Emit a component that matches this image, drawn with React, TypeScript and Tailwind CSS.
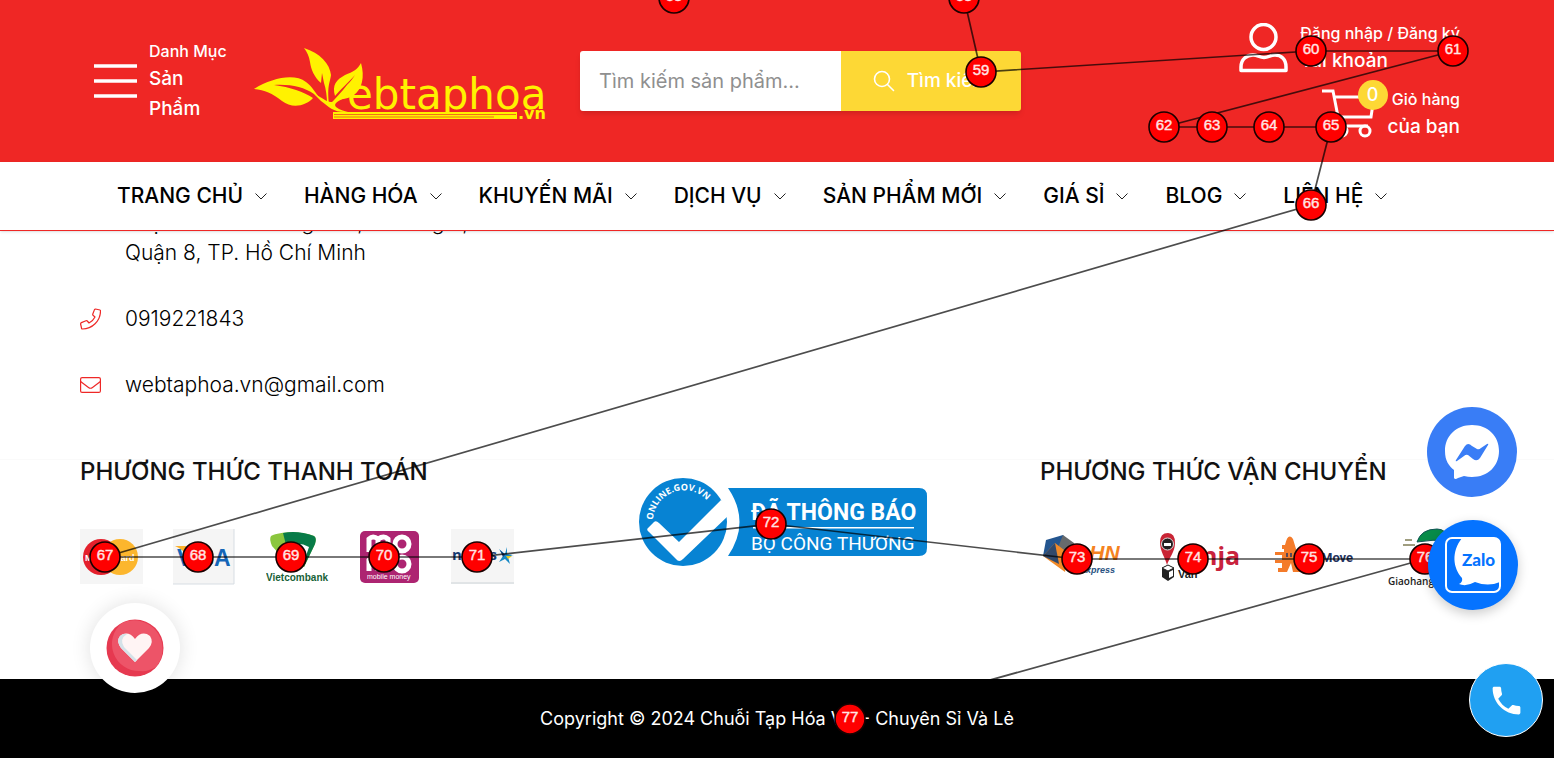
import React from "react";

type Point = { n: number; x: number; y: number };

const points: Point[] = [
  { n: 58, x: 674, y: -2 },
  { n: 58, x: 964, y: -2 },
  { n: 59, x: 981, y: 72 },
  { n: 60, x: 1311, y: 51 },
  { n: 61, x: 1453, y: 51 },
  { n: 62, x: 1164, y: 127 },
  { n: 63, x: 1212, y: 127 },
  { n: 64, x: 1269, y: 127 },
  { n: 65, x: 1331, y: 127 },
  { n: 66, x: 1311, y: 205 },
  { n: 67, x: 105, y: 557 },
  { n: 68, x: 198, y: 557 },
  { n: 69, x: 291, y: 557 },
  { n: 70, x: 384, y: 557 },
  { n: 71, x: 477, y: 557 },
  { n: 72, x: 771, y: 524 },
  { n: 73, x: 1077, y: 559 },
  { n: 74, x: 1193, y: 559 },
  { n: 75, x: 1309, y: 559 },
  { n: 76, x: 1425, y: 559 },
  { n: 77, x: 850, y: 719 },
];

const menu = ["TRANG CHỦ", "HÀNG HÓA", "KHUYẾN MÃI", "DỊCH VỤ", "SẢN PHẨM MỚI", "GIÁ SỈ", "BLOG", "LIÊN HỆ"];

function PathOverlay() {
  return (
    <svg className="pointer-events-none absolute left-0 top-0 z-20 h-[759px] w-[1554px]" viewBox="0 0 1554 759">
      <polyline
        points={points.slice(1).map((p) => `${p.x},${p.y}`).join(" ")}
        fill="none"
        stroke="#000"
        strokeOpacity="0.7"
        strokeWidth="1.7"
      />
      {points.map((p, i) => (
        <g key={i}>
          <circle cx={p.x} cy={p.y} r="15" fill="#f00" stroke="#1a0000" strokeWidth="1.6" />
          <text
            x={p.x}
            y={p.y + 3}
            textAnchor="middle"
            fontFamily="Liberation Sans, sans-serif"
            fontSize="15"
            fill="#ffe5e5"
            stroke="#ffe5e5"
            strokeWidth="0.4"
          >
            {p.n}
          </text>
        </g>
      ))}
    </svg>
  );
}

function Logo() {
  return (
    <svg width="298" height="74" viewBox="0 0 298 74" fill="#fff200" role="img" aria-label="Webtaphoa.vn">
      <path d="M0 42C18 31 40 26 52 35C58 39 61 46 67 52L60 47C50 40 36 37 20 38C36 40 50 45 59 51C52 59 38 62 28 54C18 46 11 43 0 42Z" />
      <path d="M50 1C66 6 76 17 77 28C76 36 73 38 75 57H73C73 50 72 42 70 36L68 26L67 36C60 30 57 22 56 15C55 9 53 5 50 1Z" />
      <path d="M107 16C111 30 108 42 100 48C93 53 85 51 78 56C80 52 88 45 93 38C97 34 99 31 101 28C94 36 86 43 81 49C78 38 82 33 91 28C99 25 104 22 107 16Z" />
      <path d="M60 47C68 50 73 56 78 55C81 53 84 51 94 50C84 53 79 57 82 60C86 63 90 64 94 65C80 66 75 60 67 54Z" />
      <text x="93" y="62" fontFamily="DejaVu Sans, sans-serif" fontSize="42">
        ebtaphoa
      </text>
      <rect x="79" y="65" width="184" height="7" />
      <path d="M80 67.500H262M80 70H240" stroke="#ee3a24" strokeWidth="0.700" />
      <text x="264" y="72" fontFamily="DejaVu Sans, sans-serif" fontSize="16" fontWeight="700">
        .vn
      </text>
    </svg>
  );
}

function Header() {
  return (
    <header className="relative z-10 bg-white">
      <div className="flex h-[162px] items-center bg-[#ef2725] px-[94px] text-white">
        <button type="button" className="flex w-40 items-center gap-3 text-left">
          <svg width="43" height="34" viewBox="0 0 43 34" className="shrink-0" stroke="#fff" strokeWidth="3.500">
            <path d="M0 2H43M0 17H43M0 32H43" />
          </svg>
          <span className="w-20">
            <span className="block text-base leading-[26px] font-medium">Danh Mục</span>
            <span className="block w-16 text-[19px] leading-[30px] font-medium">Sản Phẩm</span>
          </span>
        </button>
        <a href="#" className="mt-[6px] shrink-0">
          <Logo />
        </a>
        <form className="ml-7 flex h-[60px] w-[441px] shrink-0 overflow-hidden rounded-[3px] shadow-md" onSubmit={(e) => e.preventDefault()}>
          <input
            type="search"
            aria-label="Tìm kiếm sản phẩm"
            placeholder="Tìm kiếm sản phẩm..."
            className="w-[261px] bg-white px-[19px] text-xl text-black outline-none placeholder:text-[#8f8f8f]"
          />
          <button type="submit" className="flex flex-1 items-center justify-center gap-3 bg-[#fdd835] text-[19px] font-medium">
            <svg width="22" height="22" viewBox="0 0 22 22" fill="none" stroke="#fff" strokeWidth="1.600" strokeLinecap="round">
              <circle cx="9" cy="9" r="7.500" />
              <path d="M14.500 14.500L20.500 20.500" />
            </svg>
            Tìm kiếm
          </button>
        </form>
        <div className="ml-auto flex flex-col items-end gap-[10px]">
          <a href="#" className="flex items-center gap-3">
            <svg width="49" height="50" viewBox="0 0 49 50" fill="none" stroke="#fff" strokeWidth="3.500" strokeLinejoin="round">
              <circle cx="24.500" cy="14" r="12.500" />
              <path d="M2 47.500V44C2 36 8 32 14 32C19 32 20 34.500 25 34.500C30 34.500 31 32 36 32C42 32 47 36 47 44V47.500Z" />
            </svg>
            <span>
              <span className="block text-base leading-[26px] font-medium">Đăng nhập / Đăng ký</span>
              <span className="block text-[19px] leading-[30px] font-medium">Tài khoản</span>
            </span>
          </a>
          <a href="#" className="flex items-center gap-3">
            <span className="relative">
              <svg width="54" height="52" viewBox="0 0 54 52" fill="none" stroke="#fff" strokeWidth="3">
                <path d="M0 3H11L18 39M13 9H52L49 29H16M15 38H46" />
                <circle cx="43" cy="43" r="5" />
                <circle cx="20" cy="43" r="5" />
              </svg>
              <span className="absolute -top-2 left-[36px] flex size-[30px] items-center justify-center rounded-full bg-[#fdd835] text-lg font-medium">0</span>
            </span>
            <span className="text-right">
              <span className="block text-base leading-[26px] font-medium">Giỏ hàng</span>
              <span className="block text-[19px] leading-[30px] font-medium">của bạn</span>
            </span>
          </a>
        </div>
      </div>
      <nav className="flex h-[69px] items-center gap-[37px] border-b border-[#ef2725] px-[117px] shadow-sm">
        {menu.map((m) => (
          <a key={m} href="#" className="flex items-center gap-3 text-[21px] font-medium whitespace-nowrap text-black">
            {m}
            <svg width="12" height="7" viewBox="0 0 12 7" fill="none" stroke="#222" strokeWidth="1">
              <path d="M0.500 0.500L6 6L11.500 0.500" />
            </svg>
          </a>
        ))}
      </nav>
    </header>
  );
}

function Badge() {
  return (
    <svg width="290" height="90" viewBox="0 0 290 90" role="img" aria-label="Đã thông báo Bộ Công Thương">
      <path d="M90 11H281Q289 11 289 19V71Q289 79 281 79H90Q113 45 90 11Z" fill="#0783d3" />
      <circle cx="45" cy="45" r="44" fill="#0783d3" />
      <path d="M10 51L16 45Q18 43 21 46L41 65L83 23L90 28L93 34L90 39L45 82Q41 86 38 82L11 55Q8 53 10 51Z" fill="#fff" />
      <path id="badge-arc" d="M15 43A31 31 0 0 1 74 31" fill="none" />
      <text fill="#fff" fontFamily="Open Sans, sans-serif" fontSize="9" fontWeight="700">
        <textPath href="#badge-arc">ONLINE.GOV.VN</textPath>
      </text>
      <text x="113" y="43" fill="#fff" fontFamily="Roboto, sans-serif" fontSize="23" fontWeight="700">
        ĐÃ THÔNG BÁO
      </text>
      <rect x="115" y="50" width="161" height="1.500" fill="#fff" />
      <text x="113" y="73" fill="#fff" fontFamily="Roboto, sans-serif" fontSize="19">
        BỘ CÔNG THƯƠNG
      </text>
    </svg>
  );
}

function PaymentLogos() {
  return (
    <div className="flex h-[56px] justify-between">
      <svg width="63" height="56" viewBox="0 0 63 56" role="img" aria-label="Mastercard">
        <rect width="63" height="55" fill="#f5f5f5" />
        <circle cx="21" cy="28" r="18" fill="#e4202c" />
        <circle cx="40" cy="28" r="18" fill="#fcb62d" />
        <text x="5" y="32" fontFamily="Liberation Sans, sans-serif" fontSize="9" fontWeight="700" fill="#fff">
          MasterCard
        </text>
      </svg>
      <svg width="63" height="56" viewBox="0 0 63 56" role="img" aria-label="Visa">
        <rect width="61" height="55" fill="#f5f5f5" />
        <path d="M61 0V55H0" fill="none" stroke="#d7dde3" />
        <path d="M2 17H13L17 31Q12 21 2 17Z" fill="#fbb12b" />
        <text x="4" y="37" fontFamily="Liberation Sans, sans-serif" fontSize="23" fontWeight="700" fill="#1566b8">
          VISA
        </text>
      </svg>
      <svg width="63" height="56" viewBox="0 0 63 56" role="img" aria-label="Vietcombank">
        <path d="M5 7C15 2 36 2 48 7Q51 9 49 15L38 38H25L6 17Q3 10 5 7Z" fill="#8bc63e" />
        <path d="M17 4Q32 1 48 7Q51 9 49 15L38 38L40 20Q35 15 20 16Z" fill="#087b48" />
        <path d="M20 17Q33 12 43 18L37 36L26 32Z" fill="#fff" />
        <text x="0" y="52" fontFamily="Liberation Sans, sans-serif" fontSize="10" fontWeight="700" fill="#176137">
          Vietcombank
        </text>
      </svg>
      <svg width="63" height="56" viewBox="0 0 63 56" role="img" aria-label="MoMo mobile money">
        <rect x="2" y="2" width="59" height="52" rx="5" fill="#ad2471" />
        <g fill="none" stroke="#fff" strokeWidth="5">
          <path d="M11 23V10Q15 6 20 10V23M20 10Q26 6 30 10V23M11 42V31Q15 27 20 31V42M20 31Q26 27 30 31V42" />
          <circle cx="44" cy="15" r="7" />
          <circle cx="44" cy="35" r="7" />
        </g>
        <text x="9" y="50" fontFamily="Liberation Sans, sans-serif" fontSize="7" fill="#fff">
          mobile money
        </text>
      </svg>
      <svg width="63" height="56" viewBox="0 0 63 56" role="img" aria-label="Napas">
        <rect width="63" height="55" fill="#f5f5f5" />
        <path d="M0 54H63" stroke="#ccd3d7" />
        <text x="1" y="31" fontFamily="Open Sans, sans-serif" fontSize="15" fontWeight="700" fill="#173b72">
          napas
        </text>
        <path d="M48 20L54 25L56 18V25L62 26L57 28L59 35L54 30L48 33L52 27Z" fill="#1689c5" />
        <path d="M49 21L54 26L52 28Z" fill="#173b72" />
        <path d="M55 27H61L57 30Z" fill="#e8c91d" />
      </svg>
    </div>
  );
}

function ShippingLogos() {
  return (
    <div className="grid h-[62px] grid-cols-4">
      <svg width="84" height="60" viewBox="0 0 84 60" role="img" aria-label="GHN Express">
        <path d="M6 11L23 6L29 18L14 27L3 27Z" fill="#23558f" />
        <path d="M23 6L34 14L29 31L15 26Z" fill="#676a6c" />
        <path d="M3 27L15 14L28 24L25 43Z" fill="#f28a28" />
        <path d="M15 14L19 35L3 27Z" fill="#31496a" />
        <text x="33" y="31" fontFamily="Liberation Sans, sans-serif" fontSize="21" fontWeight="700" fontStyle="italic" fill="#f58220">
          GHN
        </text>
        <text x="40" y="44" fontFamily="Liberation Sans, sans-serif" fontSize="9" fontWeight="700" fontStyle="italic" fill="#28517f">
          Express
        </text>
      </svg>
      <svg width="84" height="60" viewBox="0 0 84 60" role="img" aria-label="Ninja Van">
        <path d="M10 36C8 28 3 23 3 13Q3 4 11 4Q18 4 18 14C18 23 12 29 10 36Z" fill="#c92435" />
        <circle cx="10.500" cy="15" r="6" fill="#231f20" stroke="#ddd" />
        <path d="M7 14H14V17H7Z" fill="#fff" />
        <path d="M5 39L11 36L17 39V48L11 52L5 48Z" fill="#222" />
        <path d="M5 39L11 42L17 39L11 36Z" fill="#fff" stroke="#222" />
        <path d="M12 43L16 41V47L12 49Z" fill="#fff" />
        <text x="20" y="36" fontFamily="Open Sans, sans-serif" fontSize="25" fontWeight="700" fill="#c9233d">
          ninja
        </text>
        <text x="21" y="49" fontFamily="Liberation Sans, sans-serif" fontSize="11" fontWeight="700" fill="#222">
          Van
        </text>
      </svg>
      <svg width="84" height="60" viewBox="0 0 84 60" role="img" aria-label="AhaMove">
        <path d="M9 16H12Q15 3 20 10L30 43H20L18 34L14 43H5V39H9V34H2V31H9V26H2V23H11V20H9Z" fill="#f47b2a" />
        <path d="M14 24V28M18 24V28" stroke="#243768" strokeWidth="1.500" />
        <text x="48" y="33" fontFamily="Roboto, sans-serif" fontSize="13" fontWeight="700" fill="#263560">
          Move
        </text>
      </svg>
      <svg width="84" height="60" viewBox="0 0 84 60" className="overflow-visible" role="img" aria-label="Giaohangtietkiem">
        <path d="M27 13Q31 0 47 0Q57 0 59 12Q43 10 27 13Z" fill="#078c49" stroke="#155" />
        <path d="M28 19H48M15 11H22M13 16H25" stroke="#807d55" strokeWidth="1.500" />
        <text x="-2" y="56" fontFamily="Open Sans, sans-serif" fontSize="10" fontWeight="600" fill="#222">
          Giaohangtietkiem
        </text>
      </svg>
    </div>
  );
}

function Floating() {
  return (
    <>
      <button type="button" aria-label="Yêu thích" className="absolute left-[90px] top-[603px] z-30 flex size-[90px] items-center justify-center rounded-full bg-white shadow-[0_0_20px_rgba(0,0,0,0.12)]">
        <svg width="58" height="58" viewBox="0 0 58 58">
          <circle cx="29" cy="29" r="28.500" fill="#e63950" />
          <path d="M16 4A28.500 28.500 0 0 1 50 48Q42 53 34 52A27 27 0 0 1 16 4Z" fill="#ed5468" />
          <path d="M29 43L15 29Q10 22 14 17Q22 11 29 20Q36 11 44 17Q48 23 43 29Z" fill="#fff4f4" />
          <path d="M29 43L15 29Q10 22 14 17Q17 14 21 15Q13 20 18 28L31 41Z" fill="#d5e2e8" />
        </svg>
      </button>
      <a href="#" aria-label="Messenger" className="absolute right-[37px] top-[407px] z-30 flex size-[90px] items-center justify-center rounded-full bg-[#397df6]">
        <svg width="56" height="56" viewBox="0 0 56 56">
          <path d="M28 1C12 1 1 12 1 27C1 37 5 42 10 46V54Q11 56 14 54L20 52Q24 53 28 53C44 53 55 42 55 27S44 1 28 1Z" fill="#fff" />
          <path d="M12 36L21 22Q24 18 28 22L33 25Q35 26 37 24L43 20Q45 19 44 21L36 34Q33 38 29 35L24 31Q22 30 20 32L13 37Q11 38 12 36Z" fill="#397df6" />
        </svg>
      </a>
      <a href="#" aria-label="Zalo" className="absolute right-9 top-[520px] z-30 flex size-[90px] items-center justify-center rounded-full bg-[#0573ff] shadow-[0_4px_12px_rgba(0,0,0,0.2)]">
        <svg width="56" height="56" viewBox="0 0 56 56">
          <rect x="1" y="1" width="54" height="54" rx="6" fill="#0573ff" stroke="#fff" strokeWidth="2" />
          <path d="M17 1H49Q55 1 55 7V45Q43 50 30 45Q21 50 14 47Q18 45 17 41C8 31 6 15 17 1Z" fill="#fff" />
          <text x="17" y="29" fontFamily="Lato, sans-serif" fontSize="17" fontWeight="900" fill="#0573ff">
            Zalo
          </text>
        </svg>
      </a>
      <a href="#" aria-label="Gọi điện" className="absolute right-[11px] top-[663px] z-30 flex size-[74px] items-center justify-center rounded-full border border-white bg-[#20a0f2]">
        <svg width="37" height="37" viewBox="0 0 24 24" fill="#fff">
          <path d="M6.620 10.790c1.440 2.830 3.760 5.140 6.590 6.590l2.200-2.200c.270-.270.670-.360 1.020-.240 1.120.370 2.330.570 3.570.570.550 0 1 .450 1 1V20c0 .550-.450 1-1 1-9.390 0-17-7.610-17-17 0-.550.450-1 1-1h3.500c.550 0 1 .450 1 1 0 1.250.200 2.450.570 3.570.110.350.030.740-.250 1.020l-2.200 2.200z" />
        </svg>
      </a>
    </>
  );
}

export default function App() {
  return (
    <div className="relative overflow-hidden bg-white font-['Inter',sans-serif] text-[#121212]">
      <Header />
      <main>
        <address className="-mt-[23px] flex flex-col gap-9 px-20 text-[21px] leading-[30px] font-light text-black not-italic">
          <p className="pl-[45px]">
            Phạm Thế Hà Bông Sao, Phường 5,
            <br />
            Quận 8, TP. Hồ Chí Minh
          </p>
          <a href="tel:0919221843" className="flex items-center gap-6">
            <svg width="21" height="22" viewBox="0 0 21 22" fill="none" stroke="#ee2827" strokeWidth="1.200" strokeLinejoin="round">
              <path d="M15.500 1L20 2Q20.500 2 20.500 3C20.500 13 12 21 2.500 21Q1.500 21 1.500 20L.6 16Q.6 15 1.400 14.600L6 12.800Q6.800 12.500 7.300 13L9 15Q13 13 15 9L13 7.300Q12.500 6.800 12.800 6L14.500 1.600Q14.800 1 15.500 1Z" />
            </svg>
            0919221843
          </a>
          <a href="mailto:webtaphoa.vn@gmail.com" className="flex items-center gap-6">
            <svg width="21" height="16" viewBox="0 0 21 16" fill="none" stroke="#ee2827" strokeWidth="1.200">
              <rect x="0.600" y="0.600" width="19.800" height="14.800" rx="1.500" />
              <path d="M0.600 4.500L8.500 10.500Q10.500 12 12.500 10.500L20.400 4.500" />
            </svg>
            webtaphoa.vn@gmail.com
          </a>
        </address>
        <section className="mt-[59px] grid h-[220px] grid-cols-3 gap-[46px] border-t border-[#fafafa] px-20">
          <div>
            <h2 className="text-2xl leading-6 font-medium whitespace-nowrap">PHƯƠNG THỨC THANH TOÁN</h2>
            <div className="mt-[45px]">
              <PaymentLogos />
            </div>
          </div>
          <div className="flex justify-center pt-[17px] pl-3">
            <Badge />
          </div>
          <div>
            <h2 className="text-2xl leading-6 font-medium whitespace-nowrap">PHƯƠNG THỨC VẬN CHUYỂN</h2>
            <div className="mt-[45px] -mr-8">
              <ShippingLogos />
            </div>
          </div>
        </section>
      </main>
      <footer className="flex h-[79px] items-center justify-center bg-black text-lg text-white">
        <p>Copyright © 2024 Chuỗi Tạp Hóa VN - Chuyên Sỉ Và Lẻ</p>
      </footer>
      <PathOverlay />
      <Floating />
    </div>
  );
}
